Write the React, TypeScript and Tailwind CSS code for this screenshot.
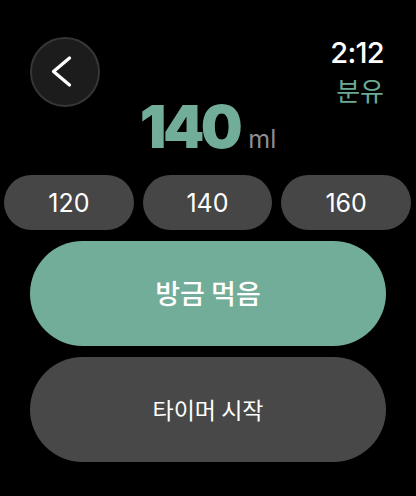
const presets = [120, 140, 160];

export default function App() {
  return (
    <div
      className="w-[416px] h-[496px] bg-black text-white overflow-hidden"
      style={{ fontFamily: '"Inter", "Noto Sans CJK KR", sans-serif' }}
    >
      {/* header */}
      <div className="flex items-start justify-between pt-[37px] pl-[30px] pr-[32px]">
        <button className="w-[70px] h-[70px] rounded-full bg-[#1c1c1c] border-2 border-[#363636] flex items-center justify-center">
          <svg width="70" height="70" viewBox="0 0 70 70" className="shrink-0">
            <polyline
              points="39.5,21 23.5,34.5 39.5,48"
              fill="none"
              stroke="white"
              strokeWidth="3.3"
              strokeLinecap="round"
              strokeLinejoin="round"
            />
          </svg>
        </button>
        <div className="flex flex-col items-end">
          <span className="mt-[1px] text-[29px] leading-none font-medium tracking-tight">2:12</span>
          <span className="mt-[10px] text-[26px] leading-none text-[#6aa993]" style={{ fontFamily: '"Noto Sans CJK KR", sans-serif' }}>
            분유
          </span>
        </div>
      </div>

      {/* amount */}
      <div className="-mt-[10px] flex items-baseline justify-center">
        <span className="text-[59px] leading-none font-black tracking-[-0.06em] text-[#72ad9a]">140</span>
        <span className="ml-[9px] text-[25px] leading-none text-[#8e8e93]">ml</span>
      </div>

      {/* presets */}
      <div className="mt-[19px] grid grid-cols-3 gap-[9px] pl-[4px] pr-[5px]">
        {presets.map((v) => (
          <button key={v} className="h-[55px] rounded-full bg-[#464646] text-[25px] text-white pt-[2px]">
            {v}
          </button>
        ))}
      </div>

      {/* actions */}
      <div className="mt-[11px] px-[30px] flex flex-col gap-[11px]" style={{ fontFamily: '"Noto Sans CJK KR", sans-serif' }}>
        <button className="h-[105px] rounded-full bg-[#72ad9a] text-[27px] font-medium text-white">방금 먹음</button>
        <button className="h-[105px] rounded-full bg-[#484848] text-[23px] text-white">타이머 시작</button>
      </div>
    </div>
  );
}
